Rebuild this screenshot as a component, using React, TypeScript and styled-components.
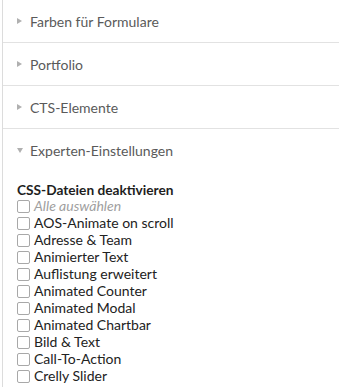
import React from 'react';
import styled, {createGlobalStyle} from 'styled-components';

const GlobalStyle = createGlobalStyle`
    html, body {
        margin: 0;
        padding: 0;
        background: #fff;
        font-family: Lato, "Open Sans", sans-serif;
    }
`

const Panel = styled.div`
    margin-left: 2px;
    border-left: 1px solid #dcdcdc;
    height: 387px;
    overflow: hidden;
`

const Section = styled.div``

const SectionHeader = styled.div<{open?: boolean}>`
    height: 42px;
    display: flex;
    align-items: center;
    gap: 7px;
    padding-left: 14px;
    border-bottom: ${props => props.open ? 'none' : '1px solid #e2e2e2'};
    font-size: 14px;
    color: #5a5a5a;
`

const Arrow = styled.span<{open?: boolean}>`
    width: 0;
    height: 0;
    border-style: solid;
    border-color: transparent;
    ${props => props.open
        ? `border-width: 5px 3.5px 0 3.5px; border-top-color: #b0b0b0;`
        : `border-width: 3.5px 0 3.5px 5px; border-left-color: #b0b0b0; margin-right: 1px;`}
`

const Body = styled.div`
    padding: 11px 14px 0;
`

const Heading = styled.div`
    font-size: 13.7px;
    font-weight: bold;
    color: #1e1e1e;
    line-height: 15px;
`

const Option = styled.label<{muted?: boolean}>`
    display: flex;
    align-items: center;
    gap: 4px;
    height: 17px;
    font-size: 14px;
    color: ${props => props.muted ? '#a0a0a0' : '#222'};
    font-style: ${props => props.muted ? 'italic' : 'normal'};
`

const Box = styled.span`
    width: 11px;
    height: 11px;
    margin-top: 1px;
    border: 1px solid #a8a8a8;
    border-radius: 2px;
    background: #fff;
    flex-shrink: 0;
`

const collapsed = ['Farben für Formulare', 'Portfolio', 'CTS-Elemente'];

const options = [
    'AOS-Animate on scroll',
    'Adresse & Team',
    'Animierter Text',
    'Auflistung erweitert',
    'Animated Counter',
    'Animated Modal',
    'Animated Chartbar',
    'Bild & Text',
    'Call-To-Action',
    'Crelly Slider',
    'Divider',
];

function App() {
    return (
        <>
            <GlobalStyle/>
            <Panel>
                {collapsed.map((title) => (
                    <Section key={title}>
                        <SectionHeader>
                            <Arrow/>
                            {title}
                        </SectionHeader>
                    </Section>
                ))}
                <Section>
                    <SectionHeader open>
                        <Arrow open/>
                        Experten-Einstellungen
                    </SectionHeader>
                    <Body>
                        <Heading>CSS-Dateien deaktivieren</Heading>
                        <Option muted><Box/>Alle auswählen</Option>
                        {options.map((name) => (
                            <Option key={name}><Box/>{name}</Option>
                        ))}
                    </Body>
                </Section>
            </Panel>
        </>
    );
}

export default App;
